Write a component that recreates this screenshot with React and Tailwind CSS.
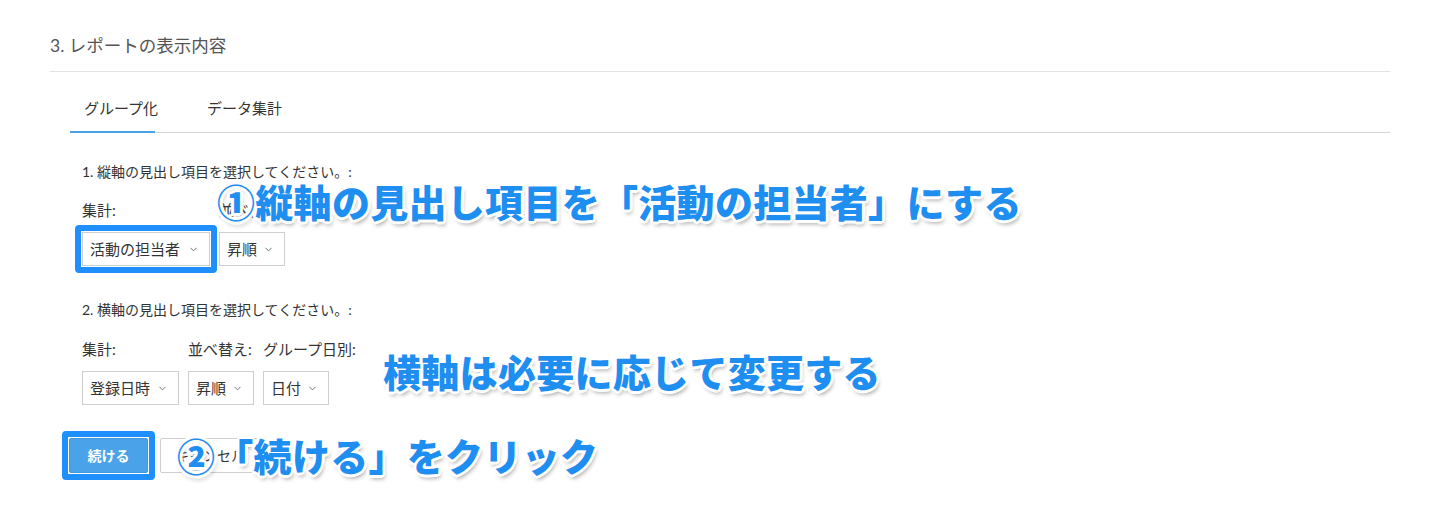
import { ChevronDown } from "lucide-react";

const ui = "font-['Lato','Noto_Sans_CJK_JP',sans-serif]";
const note =
  "absolute whitespace-nowrap font-['Noto_Sans_CJK_JP',sans-serif] font-black text-[38px] leading-none tracking-[0.3px] text-[#1f8ef1] [text-shadow:2px_0_0_#fff,-2px_0_0_#fff,0_2px_0_#fff,0_-2px_0_#fff,2px_2px_0_#fff,-2px_-2px_0_#fff,2px_-2px_0_#fff,-2px_2px_0_#fff,3px_0_0_#fff,-3px_0_0_#fff,0_3px_0_#fff,0_-3px_0_#fff,2px_4px_4px_rgba(0,0,0,0.35)]";

const Select = ({ label, w }) => (
  <div
    className={`flex items-center justify-between h-[34px] border border-[#cfcfcf] bg-white pl-[7px] pr-[10px] text-[15px] text-[#333] ${w}`}
  >
    <span>{label}</span>
    <ChevronDown size={11} strokeWidth={2} className="text-[#666]" />
  </div>
);

const Highlight = () => (
  <div className="absolute -inset-[7px] border-[6px] border-[#1e8ffc] rounded-[4px] pointer-events-none" />
);

const Field = ({ label, children, w }) => (
  <div className={`flex flex-col ${w || ""}`}>
    <span className="text-[15px] leading-[20px] whitespace-nowrap">{label}</span>
    <div className="relative mt-[12px]">{children}</div>
  </div>
);

export default function App() {
  return (
    <div className={`relative w-[1440px] h-[527px] bg-white overflow-hidden ${ui}`}>
      <div className="px-[50px] pt-[34px]">
        <h2 className="text-[17.5px] leading-[24px] text-[#555] pb-[13px] border-b border-[#e3e3e3]">
          3. レポートの表示内容
        </h2>

        <div className="ml-[20px] mt-[25px]">
          <div className="flex border-b border-[#d4d4d4] text-[15px] leading-[22px] text-[#333] whitespace-nowrap">
            <div className="w-[85px] shrink-0 pl-[14px] pb-[12px] border-b-2 border-[#4aa3e8] -mb-px">
              グループ化
            </div>
            <div className="pl-[52px] pb-[12px]">データ集計</div>
          </div>

          <div className="pl-[12px] pt-[29px] text-[#333]">
            <p className="text-[14px] leading-[20px]">1. 縦軸の見出し項目を選択してください。:</p>
            <div className="flex gap-[9px] mt-[18px]">
              <Field label="集計:" w="w-[128px]">
                <Select label="活動の担当者" w="w-[128px]" />
                <Highlight />
              </Field>
              <Field label="並べ替え:">
                <Select label="昇順" w="w-[66px]" />
              </Field>
            </div>

            <p className="text-[14px] leading-[20px] mt-[34px]">2. 横軸の見出し項目を選択してください。:</p>
            <div className="flex gap-[9px] mt-[19px]">
              <Field label="集計:">
                <Select label="登録日時" w="w-[97px]" />
              </Field>
              <Field label="並べ替え:">
                <Select label="昇順" w="w-[66px]" />
              </Field>
              <Field label="グループ日別:">
                <Select label="日付" w="w-[66px]" />
              </Field>
            </div>
          </div>

          <div className="flex gap-[12px] mt-[33px] -ml-[1px]">
            <div className="relative">
              <button className="w-[79px] h-[35px] bg-[#4aa3e8] border border-[#3f97dc] rounded-[2px] text-white text-[14px] font-bold">
                続ける
              </button>
              <Highlight />
            </div>
            <button className="w-[100px] h-[35px] bg-white border border-[#cfcfcf] rounded-[2px] text-[#333] text-[14px]">
              キャンセル
            </button>
          </div>
        </div>
      </div>

      <div className={`${note} left-[217px] top-[182px]`}>①縦軸の見出し項目を「活動の担当者」にする</div>
      <div className={`${note} left-[383px] top-[352px]`}>横軸は必要に応じて変更する</div>
      <div className={`${note} left-[177px] top-[436px]`}>②「続ける」をクリック</div>
    </div>
  );
}
